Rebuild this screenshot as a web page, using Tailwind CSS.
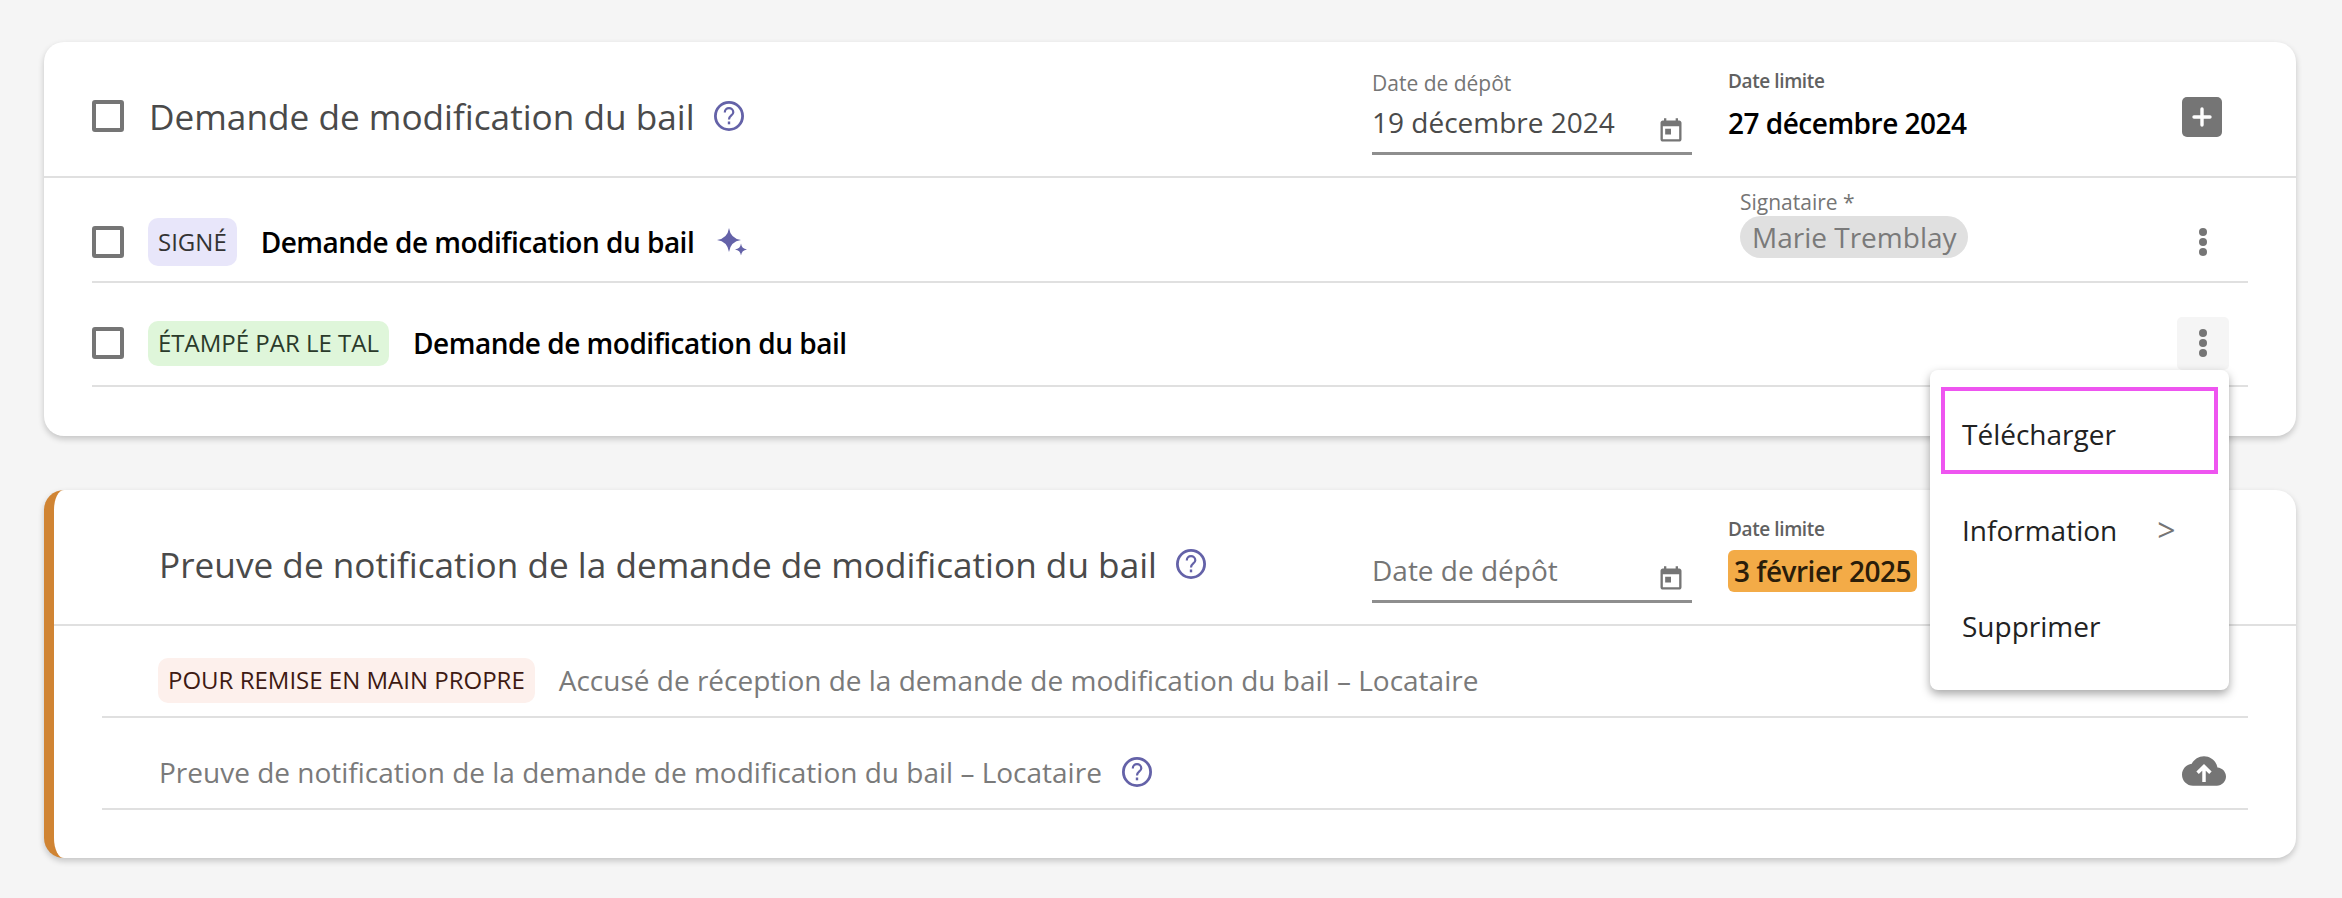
<!DOCTYPE html>
<html lang="fr">
<head>
    <meta charset="UTF-8">
    <title>Documents</title>
    <script src="https://cdn.jsdelivr.net/npm/@tailwindcss/browser@4"></script>
</head>
<body class="bg-[#f5f5f5] font-['Open_Sans',sans-serif]">

<div class="relative h-[898px] overflow-hidden pt-[42px] pl-[44px] pr-[46px]">

    <!-- Card 1 -->
    <section class="h-[394px] bg-white rounded-[20px] shadow-[0_3px_6px_rgba(0,0,0,0.2)]">
        <div class="h-[136px] flex items-start border-b-2 border-[#e0e0e0]">
            <div class="flex-1 flex items-center h-full pl-[48px] pt-[14px]">
                <span class="w-[32px] h-[32px] border-[4px] border-[#757575] rounded-[3px]"></span>
                <h2 class="ml-[25px] text-[35.200px] text-[#4a4a4a]">Demande de modification du bail</h2>
                <svg class="ml-[18px] w-[32px] h-[32px]" viewBox="0 0 32 32" fill="none" stroke="#6462a8" stroke-width="2.800"><circle cx="16" cy="16" r="13.600"/><path stroke-width="2.200" d="M11.800 12.500c0-2.600 1.900-4.300 4.200-4.300s4.300 1.700 4.300 4c0 3.300-4.300 3.300-4.300 7.300"/><path stroke-width="2.400" d="M16 21.500v2.800"/></svg>
            </div>
            <div class="w-[320px] pt-[27px]">
                <div class="h-[28px] text-[21px] leading-[28px] text-[#757575]">Date de dépôt</div>
                <div class="h-[58px] flex items-start justify-between border-b-[3px] border-[#8e8e8e] pr-[7px]">
                    <span class="pt-[7px] text-[28px] leading-[37px] text-[#4a4a4a]">19 décembre 2024</span>
                    <svg class="mt-[20px] w-[28px] h-[28px]" viewBox="0 0 24 24" fill="#757575"><path d="M19 3h-1V1h-2v2H8V1H6v2H5c-1.110 0-1.990.9-1.990 2L3 19c0 1.100.89 2 2 2h14c1.100 0 2-.9 2-2V5c0-1.100-.9-2-2-2zm0 16H5V8h14v11zM7 10h5v5H7z"/></svg>
                </div>
            </div>
            <div class="w-[454px] ml-[36px] pt-[25px]">
                <div class="h-[28px] text-[19px] tracking-[-0.400px] leading-[28px] font-semibold text-[#616161]">Date limite</div>
                <div class="pt-[10px] text-[28px] tracking-[-0.500px] leading-[37px] font-semibold text-black">27 décembre 2024</div>
            </div>
            <button class="w-[40px] h-[40px] mt-[55px] mr-[74px] rounded-[5px] bg-[#757575] flex items-center justify-center">
                <svg class="w-[24px] h-[24px]" viewBox="0 0 24 24" stroke="white" stroke-width="3.400" stroke-linecap="round"><path d="M12 4v16M4 12h16"/></svg>
            </button>
        </div>

        <div class="pl-[48px] pr-[48px]">
            <div class="h-[105px] pt-[24px] flex items-center border-b-2 border-[#e0e0e0]">
                <span class="w-[32px] h-[32px] border-[4px] border-[#757575] rounded-[3px]"></span>
                <span class="ml-[24px] h-[48px] px-[10px] flex items-center rounded-[10px] bg-[#e8e6fa] text-[24px] text-[#333333]">SIGNÉ</span>
                <span class="ml-[24px] text-[28px] tracking-[-0.500px] font-semibold text-black">Demande de modification du bail</span>
                <svg class="ml-[23px] w-[30px] h-[28px]" viewBox="0 0 30 28" fill="#6462a8"><path d="M12 0Q13.500 10.500 24 12 13.500 13.500 12 24 10.500 13.500 0 12 10.500 10.500 12 0z"/><path d="M24 15.500Q24.700 20.800 30 21.500 24.700 22.200 24 27.500 23.300 22.200 18 21.500 23.300 20.800 24 15.500z"/></svg>
                <div class="ml-auto w-[228px] self-start -mt-[24px] pt-[10px]">
                    <div class="h-[28px] text-[21px] leading-[28px] text-[#757575]">Signataire *</div>
                    <div class="h-[42px] w-[228px] px-[12px] flex items-center rounded-full bg-[#e0e0e0] text-[28px] whitespace-nowrap text-[#7a7a7a]">Marie Tremblay</div>
                </div>
                <svg class="ml-[229px] mr-[39px] w-[12px] h-[30px]" viewBox="0 0 12 30" fill="#757575"><circle cx="6" cy="5" r="4"/><circle cx="6" cy="15" r="4"/><circle cx="6" cy="25" r="4"/></svg>
            </div>
            <div class="h-[104px] pt-[18px] flex items-center border-b-2 border-[#e0e0e0]">
                <span class="w-[32px] h-[32px] border-[4px] border-[#757575] rounded-[3px]"></span>
                <span class="ml-[24px] h-[45px] px-[10px] flex items-center rounded-[10px] bg-[#dff6da] text-[24px] text-[#2a3a2a]">ÉTAMPÉ PAR LE TAL</span>
                <span class="ml-[24px] text-[28px] tracking-[-0.500px] font-semibold text-black">Demande de modification du bail</span>
                <div class="ml-auto mr-[19px] w-[52px] h-[53px] rounded-[5px] bg-[#f5f5f5] flex items-center justify-center">
                    <svg class="w-[12px] h-[30px]" viewBox="0 0 12 30" fill="#757575"><circle cx="6" cy="5" r="4"/><circle cx="6" cy="15" r="4"/><circle cx="6" cy="25" r="4"/></svg>
                </div>
            </div>
        </div>
    </section>

    <!-- Card 2 -->
    <section class="mt-[54px] h-[368px] bg-white rounded-[20px] border-l-[10px] border-[#d08433] shadow-[0_3px_6px_rgba(0,0,0,0.2)]">
        <div class="h-[136px] flex items-start border-b-2 border-[#e0e0e0]">
            <div class="flex-1 flex items-center h-full pl-[105px] pt-[14px]">
                <h2 class="text-[35.200px] text-[#4a4a4a]">Preuve de notification de la demande de modification du bail</h2>
                <svg class="ml-[18px] w-[32px] h-[32px]" viewBox="0 0 32 32" fill="none" stroke="#6462a8" stroke-width="2.800"><circle cx="16" cy="16" r="13.600"/><path stroke-width="2.200" d="M11.800 12.500c0-2.600 1.900-4.300 4.200-4.300s4.300 1.700 4.300 4c0 3.300-4.300 3.300-4.300 7.300"/><path stroke-width="2.400" d="M16 21.500v2.800"/></svg>
            </div>
            <div class="w-[320px] pt-[55px]">
                <div class="h-[58px] flex items-start justify-between border-b-[3px] border-[#8e8e8e] pr-[7px]">
                    <span class="pt-[7px] text-[28px] leading-[37px] text-[#757575]">Date de dépôt</span>
                    <svg class="mt-[20px] w-[28px] h-[28px]" viewBox="0 0 24 24" fill="#757575"><path d="M19 3h-1V1h-2v2H8V1H6v2H5c-1.110 0-1.990.9-1.990 2L3 19c0 1.100.89 2 2 2h14c1.100 0 2-.9 2-2V5c0-1.100-.9-2-2-2zm0 16H5V8h14v11zM7 10h5v5H7z"/></svg>
                </div>
            </div>
            <div class="w-[454px] ml-[36px] pt-[25px]">
                <div class="h-[28px] text-[19px] tracking-[-0.400px] leading-[28px] font-semibold text-[#616161]">Date limite</div>
                <div class="mt-[7px] w-fit h-[42px] px-[6px] flex items-center rounded-[6px] bg-[#f3ab47] text-[28px] tracking-[-0.500px] font-semibold text-[#2a1d0a]">3 février 2025</div>
            </div>
            <div class="w-[40px] mr-[74px]"></div>
        </div>

        <div class="pl-[48px] pr-[48px]">
            <div class="h-[92px] pt-[18px] flex items-center border-b-2 border-[#e0e0e0] pl-[56px]">
                <span class="h-[45px] px-[10px] flex items-center rounded-[10px] bg-[#fdf0ec] text-[24px] text-[#3e1a13]">POUR REMISE EN MAIN PROPRE</span>
                <span class="ml-[24px] text-[28px] text-[#7a7a7a]">Accusé de réception de la demande de modification du bail – Locataire</span>
            </div>
            <div class="h-[92px] pt-[18px] flex items-center border-b-2 border-[#e0e0e0] pl-[57px]">
                <span class="text-[28px] text-[#7a7a7a]">Preuve de notification de la demande de modification du bail – Locataire</span>
                <svg class="ml-[19px] w-[32px] h-[32px]" viewBox="0 0 32 32" fill="none" stroke="#6462a8" stroke-width="2.800"><circle cx="16" cy="16" r="13.600"/><path stroke-width="2.200" d="M11.800 12.500c0-2.600 1.900-4.300 4.200-4.300s4.300 1.700 4.300 4c0 3.300-4.300 3.300-4.300 7.300"/><path stroke-width="2.400" d="M16 21.500v2.800"/></svg>
                <svg class="ml-auto mr-[22px] w-[44px] h-[44px] -mt-[2px]" viewBox="0 0 24 24"><path fill="#757575" d="M19.350 10.040C18.670 6.590 15.640 4 12 4 9.110 4 6.600 5.640 5.350 8.040 2.340 8.360 0 10.910 0 14c0 3.310 2.690 6 6 6h13c2.760 0 5-2.240 5-5 0-2.640-2.050-4.780-4.650-4.960z"/><path fill="none" stroke="white" stroke-width="1.900" d="M12 18v-8M8.500 13l3.500-3.500 3.500 3.500"/></svg>
            </div>
        </div>
    </section>

    <!-- Menu -->
    <div class="absolute left-[1930px] top-[370px] w-[299px] h-[320px] bg-white rounded-[8px] shadow-[0_4px_10px_rgba(0,0,0,0.35)] pt-[17px] px-[11px] text-[28px] text-[#222222]">
        <div class="h-[87px] border-[4px] border-[#ee55f0] pl-[17px] flex items-center pt-[7px]">Télécharger</div>
        <div class="h-[96px] pl-[21px] flex items-center pt-[15px]">Information<span class="ml-[40px] text-[32px] leading-none text-[#757575]">&gt;</span></div>
        <div class="h-[96px] pl-[21px] flex items-center pt-[15px]">Supprimer</div>
    </div>
</div>

</body>
</html>
